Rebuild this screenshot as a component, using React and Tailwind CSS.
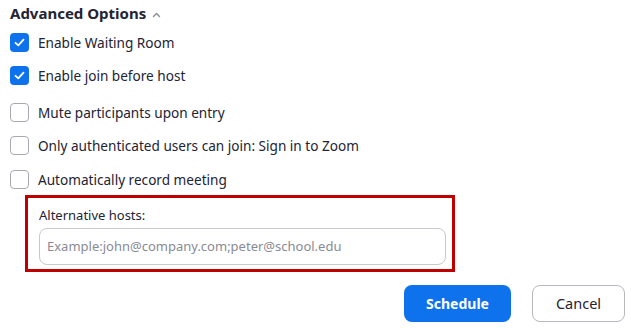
import React from "react";

function Check({ checked }) {
  if (checked) {
    return (
      <div className="w-[19px] h-[19px] rounded-[4px] bg-[#0e72ed] flex items-center justify-center shrink-0">
        <svg width="13" height="13" viewBox="0 0 13 13" fill="none">
          <path d="M2.5 6.8 L5.3 9.4 L10.5 3.6" stroke="white" strokeWidth="1.8" strokeLinecap="round" strokeLinejoin="round" />
        </svg>
      </div>
    );
  }
  return <div className="w-[19px] h-[19px] rounded-[4px] border border-[#a9a9b3] bg-white shrink-0" />;
}

function Row({ checked, label, className = "" }) {
  return (
    <div className={"flex items-center gap-[9px] pl-[10px] " + className}>
      <Check checked={checked} />
      <span className="text-[13.6px] text-[#232333] leading-[19px]">{label}</span>
    </div>
  );
}

export default function App() {
  return (
    <div className="w-[631px] h-[328px] bg-white overflow-hidden" style={{ fontFamily: '"Noto Sans", "Open Sans", sans-serif' }}>
      <div className="flex items-center pl-[10px] pt-[3px] h-[24px]">
        <span className="text-[15px] font-bold text-[#232333]">Advanced Options</span>
        <svg className="ml-[6px] mt-[2px]" width="9" height="6" viewBox="0 0 9 6" fill="none">
          <path d="M1.5 4.5 L4.5 1.5 L7.5 4.5" stroke="#8a8a94" strokeWidth="1.4" strokeLinecap="round" strokeLinejoin="round" />
        </svg>
      </div>
      <Row checked label="Enable Waiting Room" className="mt-[9px]" />
      <Row checked label="Enable join before host" className="mt-[14px]" />
      <Row label="Mute participants upon entry" className="mt-[18px]" />
      <Row label="Only authenticated users can join: Sign in to Zoom" className="mt-[14px]" />
      <Row label="Automatically record meeting" className="mt-[15px]" />
      <div className="ml-[25px] mt-[6px] w-[430px] h-[77px] border-[3px] border-[#c00000] pl-[11px] pr-[6px] pt-[8px]">
        <div className="text-[13px] text-[#232333] leading-[18px]">Alternative hosts:</div>
        <div className="mt-[4px] h-[37px] rounded-[8px] border border-[#c8c8d0] flex items-center pl-[7px] text-[13px] text-[#8a8a94]">
          Example:john@company.com;peter@school.edu
        </div>
      </div>
      <div className="flex justify-end gap-[21px] pr-[6px] mt-[13px]">
        <button className="w-[107px] h-[37px] rounded-[8px] bg-[#0e72ed] text-white font-bold text-[14px]">Schedule</button>
        <button className="w-[93px] h-[37px] rounded-[8px] border border-[#b8b8c0] bg-white text-[#232333] text-[14.5px]">Cancel</button>
      </div>
    </div>
  );
}
